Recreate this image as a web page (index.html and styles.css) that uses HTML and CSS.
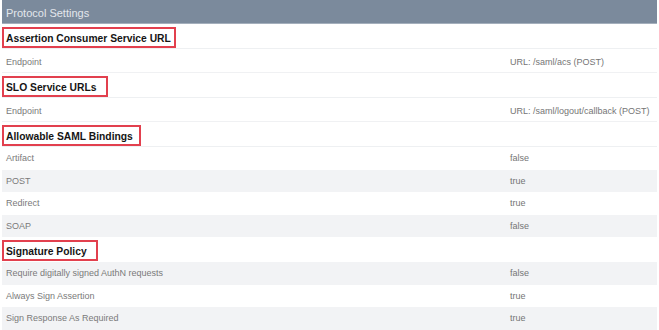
FILE: index.html
```html
<!DOCTYPE html>
<html lang="en">
<head>
<meta charset="utf-8">
<title>Protocol Settings</title>
<link rel="stylesheet" href="styles.css">
</head>
<body>
<div class="panel">
  <div class="panel-title">Protocol Settings</div>

  <div class="section-head"><span class="mark mark-a">Assertion Consumer Service URL</span></div>
  <div class="row row-tall"><span class="label">Endpoint</span><span class="value">URL: /saml/acs (POST)</span></div>

  <div class="section-head"><span class="mark mark-b">SLO Service URLs</span></div>
  <div class="row row-tall"><span class="label">Endpoint</span><span class="value">URL: /saml/logout/callback (POST)</span></div>

  <div class="section-head"><span class="mark mark-c">Allowable SAML Bindings</span></div>
  <div class="row"><span class="label">Artifact</span><span class="value">false</span></div>
  <div class="row alt"><span class="label">POST</span><span class="value">true</span></div>
  <div class="row"><span class="label">Redirect</span><span class="value">true</span></div>
  <div class="row alt"><span class="label">SOAP</span><span class="value">false</span></div>

  <div class="section-head section-plain"><span class="mark mark-d">Signature Policy</span></div>
  <div class="row alt"><span class="label">Require digitally signed AuthN requests</span><span class="value">false</span></div>
  <div class="row"><span class="label">Always Sign Assertion</span><span class="value">true</span></div>
  <div class="row alt"><span class="label">Sign Response As Required</span><span class="value">true</span></div>
</div>
</body>
</html>
```

FILE: styles.css
```css
html, body {
  margin: 0;
  padding: 0;
  background: #ffffff;
}

body {
  padding: 0 2px;
  font-family: "Liberation Sans", Arial, Helvetica, sans-serif;
}

.panel {
  display: flex;
  flex-direction: column;
}

.panel-title {
  height: 23px;
  line-height: 26px;
  padding-left: 4px;
  background: #7b8a9c;
  border-bottom: 1px solid #a4afbc;
  color: #e3e7ec;
  font-size: 11px;
}

.section-head {
  height: 24px;
  display: flex;
  align-items: center;
  border-bottom: 1px solid #eef0f2;
  background: #ffffff;
}

.section-plain {
  border-bottom: 0;
  height: 25px;
}

.mark {
  display: inline-block;
  height: 17px;
  line-height: 19px;
  padding-left: 2px;
  border: 2px solid #e2404e;
  color: #151515;
  font-weight: bold;
  font-size: 10.3px;
  margin-top: 2px;
}

.mark-a { padding-right: 3px; }
.mark-b { padding-right: 10px; }
.mark-c { padding-right: 6px; }
.mark-d { padding-right: 9px; }

.row {
  height: 22.5px;
  display: grid;
  grid-template-columns: 504px 1fr;
  align-items: center;
  padding-left: 4px;
  font-size: 9px;
  color: #7a7a7a;
  background: #ffffff;
}

.row-tall {
  height: 23px;
  border-bottom: 1px solid #f0f1f3;
}

.row-tall .label,
.row-tall .value {
  padding-top: 2px;
}

.row.alt {
  background: #f2f3f5;
}

.value {
  color: #757575;
}
```
